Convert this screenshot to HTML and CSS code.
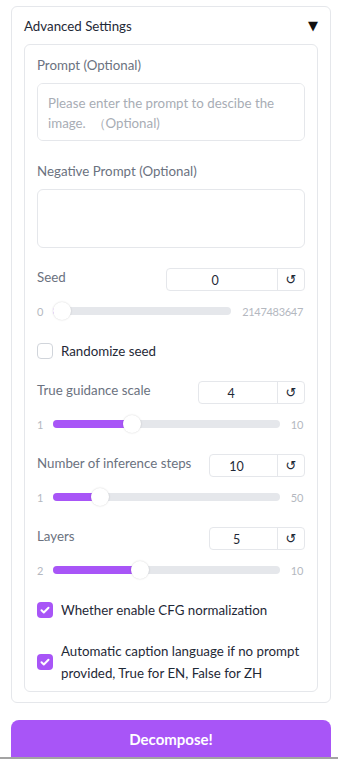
FILE: index.html
```html
<!DOCTYPE html>
<html lang="en">
<head>
<meta charset="UTF-8">
<meta name="viewport" content="width=device-width, initial-scale=1.0">
<title>Advanced Settings</title>
<link rel="stylesheet" href="styles.css">
</head>
<body>
<div class="page">
    <div class="accordion">
        <div class="accordion-head">
            <span>Advanced Settings</span>
            <span class="caret">▼</span>
        </div>
        <div class="panel">
            <div class="field">
                <label class="label">Prompt (Optional)</label>
                <textarea class="textbox" placeholder="Please enter the prompt to descibe the image.  （Optional)"></textarea>
            </div>
            <div class="field">
                <label class="label">Negative Prompt (Optional)</label>
                <textarea class="textbox tall"></textarea>
            </div>

            <div class="slider-block">
                <div class="slider-head">
                    <span class="label">Seed</span>
                    <div class="number seed-w">
                        <span class="number-value">0</span>
                        <span class="reset">↺</span>
                    </div>
                </div>
                <div class="slider-row">
                    <span class="limit min">0</span>
                    <div class="track" style="--v: 0"><div class="fill"></div><div class="thumb"></div></div>
                    <span class="limit">2147483647</span>
                </div>
            </div>

            <label class="check">
                <span class="box"></span>
                <span>Randomize seed</span>
            </label>

            <div class="slider-block">
                <div class="slider-head">
                    <span class="label">True guidance scale</span>
                    <div class="number mid-w">
                        <span class="number-value">4</span>
                        <span class="reset">↺</span>
                    </div>
                </div>
                <div class="slider-row">
                    <span class="limit min">1</span>
                    <div class="track" style="--v: 0.3333"><div class="fill"></div><div class="thumb"></div></div>
                    <span class="limit">10</span>
                </div>
            </div>

            <div class="slider-block">
                <div class="slider-head">
                    <span class="label">Number of inference steps</span>
                    <div class="number small-w">
                        <span class="number-value">10</span>
                        <span class="reset">↺</span>
                    </div>
                </div>
                <div class="slider-row">
                    <span class="limit min">1</span>
                    <div class="track" style="--v: 0.1837"><div class="fill"></div><div class="thumb"></div></div>
                    <span class="limit">50</span>
                </div>
            </div>

            <div class="slider-block">
                <div class="slider-head">
                    <span class="label">Layers</span>
                    <div class="number small-w">
                        <span class="number-value">5</span>
                        <span class="reset">↺</span>
                    </div>
                </div>
                <div class="slider-row">
                    <span class="limit min">2</span>
                    <div class="track" style="--v: 0.375"><div class="fill"></div><div class="thumb"></div></div>
                    <span class="limit">10</span>
                </div>
            </div>

            <label class="check">
                <span class="box checked">
                    <svg viewBox="0 0 16 16" width="16" height="16"><path d="M4.5 8.3l2.3 2.2 4.7-4.8" fill="none" stroke="#fff" stroke-width="2" stroke-linecap="round" stroke-linejoin="round"/></svg>
                </span>
                <span>Whether enable CFG normalization</span>
            </label>

            <label class="check two-line">
                <span class="box checked">
                    <svg viewBox="0 0 16 16" width="16" height="16"><path d="M4.5 8.3l2.3 2.2 4.7-4.8" fill="none" stroke="#fff" stroke-width="2" stroke-linecap="round" stroke-linejoin="round"/></svg>
                </span>
                <span>Automatic caption language if no prompt provided, True for EN, False for ZH</span>
            </label>
        </div>
    </div>

    <button class="primary">Decompose!</button>
</div>
<div class="bottom-bar"></div>
</body>
</html>
```

FILE: styles.css
```css
body {
    margin: 0;
    padding: 0;
    background-color: #fff;
    font-family: Lato, "Liberation Sans", sans-serif;
    font-size: 13.3px;
    color: #1f2937;
}
.page {
    padding: 6px 7px 0 11px;
    display: flex;
    flex-direction: column;
}
.accordion {
    border: 1px solid #e5e7eb;
    border-radius: 6px;
    padding: 9px 12px 10px 12px;
}
.accordion-head {
    display: flex;
    justify-content: space-between;
    align-items: center;
    height: 20px;
    line-height: 20px;
    margin-bottom: 8px;
    color: #1f2937;
}
.caret {
    font-family: "DejaVu Sans", sans-serif;
    font-size: 13px;
    color: #111;
}
.panel {
    border: 1px solid #e5e7eb;
    border-radius: 6px;
    padding: 10px 12px 7px 12px;
    display: flex;
    flex-direction: column;
    gap: 20px;
}
.field {
    display: flex;
    flex-direction: column;
    gap: 8px;
}
.label {
    color: #6b7280;
    line-height: 20px;
}
.textbox {
    height: 58px;
    box-sizing: border-box;
    border: 1px solid #e5e7eb;
    border-radius: 6px;
    padding: 9px 10px;
    font-family: inherit;
    font-size: 13.3px;
    line-height: 20px;
    resize: none;
    color: #1f2937;
}
.textbox::placeholder {
    color: #a8adb5;
}
.textbox.tall {
    height: 59px;
}
.slider-head {
    display: flex;
    justify-content: space-between;
    align-items: flex-start;
    height: 23px;
}
.slider-head .label {
    margin-top: -1px;
}
.number {
    display: flex;
    height: 23px;
    box-sizing: border-box;
    border: 1px solid #e5e7eb;
    border-radius: 4px;
    font-size: 12.5px;
}
.seed-w { width: 139px; }
.mid-w { width: 107px; }
.small-w { width: 96px; }
.number-value {
    flex: 1;
    text-align: center;
    line-height: 23px;
    padding-right: 14px;
    color: #1f2937;
}
.reset {
    width: 26px;
    border-left: 1px solid #e5e7eb;
    text-align: center;
    line-height: 21px;
    font-family: "DejaVu Sans", sans-serif;
    font-size: 13px;
    color: #1f2937;
}
.slider-row {
    display: flex;
    align-items: center;
    height: 20px;
    margin-top: 10px;
    gap: 11px;
}
.limit {
    color: #b4b8bf;
    font-size: 11px;
    letter-spacing: -0.3px;
    padding-right: 2px;
}
.limit.min {
    width: 16px;
    margin-right: -11px;
    padding-right: 0;
}
.track {
    flex: 1;
    height: 8px;
    border-radius: 4px;
    background-color: #e5e7eb;
    position: relative;
}
.fill {
    height: 100%;
    width: calc(9px + var(--v) * (100% - 18px));
    border-radius: 4px;
    background-color: #a855f7;
}
.thumb {
    position: absolute;
    top: 50%;
    left: calc(9px + var(--v) * (100% - 18px));
    width: 18px;
    height: 18px;
    margin: -9px 0 0 -9px;
    border-radius: 50%;
    background-color: #fff;
    box-shadow: 0 0 2px rgba(0, 0, 0, 0.18);
}
.check {
    display: flex;
    align-items: center;
    gap: 8px;
    line-height: 20px;
    color: #1f2937;
}
.check.two-line {
    line-height: 22px;
}
.box {
    flex: none;
    width: 16px;
    height: 16px;
    box-sizing: border-box;
    border: 1px solid #d1d5db;
    border-radius: 4px;
    background-color: #fff;
}
.box.checked {
    border: none;
    background-color: #a855f7;
}
.box svg {
    display: block;
}
.primary {
    margin-top: 17px;
    height: 37px;
    border: none;
    border-radius: 8px 8px 0 0;
    background-color: #a855f7;
    color: #fff;
    font-family: inherit;
    font-size: 15px;
    font-weight: bold;
}
.bottom-bar {
    height: 8px;
    background-color: #a3a3a3;
}
```
